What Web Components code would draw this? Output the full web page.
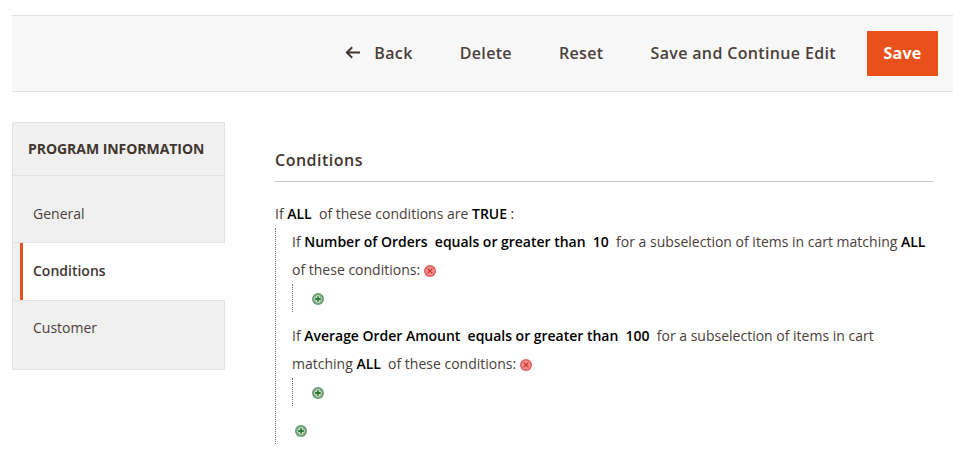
<!DOCTYPE html>
<html>
<head>
<meta charset="utf-8">
<title>Program</title>
<style>
html, body { margin: 0; background: #fff; }
body { font-family: "Open Sans", sans-serif; color: #41362f; }
</style>
</head>
<body>
<page-shell>
    <action-bar slot="bar">
        <action-link back>Back</action-link>
        <action-link>Delete</action-link>
        <action-link>Reset</action-link>
        <action-link>Save and Continue Edit</action-link>
        <primary-button>Save</primary-button>
    </action-bar>
    <side-tabs slot="side" heading="PROGRAM INFORMATION">
        <side-tab first>General</side-tab>
        <side-tab active>Conditions</side-tab>
        <side-tab last>Customer</side-tab>
    </side-tabs>
    <rule-panel slot="main" heading="Conditions">
        <rule-line>If <b>ALL</b>&nbsp; of these conditions are <b>TRUE</b> :</rule-line>
        <rule-group root>
            <rule-line>If <b>Number of Orders</b>&nbsp; <b>equals or greater than</b>&nbsp; <b>10</b>&nbsp; for a subselection of items in cart matching <b>ALL</b>&nbsp; of these conditions: <rule-icon kind="remove"></rule-icon></rule-line>
            <rule-group><rule-icon kind="add"></rule-icon></rule-group>
            <rule-line second>If <b>Average Order Amount</b>&nbsp; <b>equals or greater than</b>&nbsp; <b>100</b>&nbsp; for a subselection of items in cart matching <b>ALL</b>&nbsp; of these conditions: <rule-icon kind="remove"></rule-icon></rule-line>
            <rule-group><rule-icon kind="add"></rule-icon></rule-group>
            <rule-icon kind="add" slot="foot"></rule-icon>
        </rule-group>
    </rule-panel>
</page-shell>

<script>
customElements.define("page-shell", class extends HTMLElement {
    constructor() {
        super().attachShadow({ mode: "open" }).innerHTML = `
        <style>
        :host { display: block; padding: 15px 17px 0 12px; }
        .cols { display: flex; align-items: flex-start; margin-top: 30px; }
        </style>
        <slot name="bar"></slot>
        <div class="cols">
            <slot name="side"></slot>
            <slot name="main"></slot>
        </div>`;
    }
});

customElements.define("action-bar", class extends HTMLElement {
    constructor() {
        super().attachShadow({ mode: "open" }).innerHTML = `
        <style>
        :host {
            display: flex;
            justify-content: flex-end;
            align-items: center;
            box-sizing: border-box;
            height: 77px;
            padding-right: 15px;
            background: #f8f8f8;
            border-top: 1px solid #e3e3e3;
            border-bottom: 1px solid #e3e3e3;
        }
        </style>
        <slot></slot>`;
    }
});

customElements.define("action-link", class extends HTMLElement {
    constructor() {
        super().attachShadow({ mode: "open" }).innerHTML = `
        <style>
        :host {
            display: inline-flex;
            align-items: center;
            margin-right: 31px;
            padding: 0 0 2px 16px;
            font-size: 16px;
            font-weight: 600;
            letter-spacing: .35px;
            line-height: 22px;
            color: #4a403a;
            white-space: nowrap;
        }
        svg { display: none; width: 16px; height: 13px; margin-right: 13px; }
        :host([back]) svg { display: block; }
        </style>
        <svg viewBox="0 0 16 13"><path d="M15 6.5H2M7.2 1.2 1.8 6.5l5.4 5.3" fill="none" stroke="#41362f" stroke-width="1.9"/></svg>
        <slot></slot>`;
    }
});

customElements.define("primary-button", class extends HTMLElement {
    constructor() {
        super().attachShadow({ mode: "open" }).innerHTML = `
        <style>
        :host {
            display: flex;
            align-items: center;
            justify-content: center;
            box-sizing: border-box;
            width: 71px;
            height: 45px;
            padding-bottom: 2px;
            background: #e85119;
            color: #fff;
            font-size: 16px;
            font-weight: 700;
            letter-spacing: .3px;
        }
        </style>
        <slot></slot>`;
    }
});

customElements.define("side-tabs", class extends HTMLElement {
    constructor() {
        super().attachShadow({ mode: "open" }).innerHTML = `
        <style>
        :host {
            display: block;
            flex: none;
            box-sizing: border-box;
            width: 213px;
            height: 248px;
            background: #f0f0f0;
            border: 1px solid #e3e3e3;
        }
        h2 {
            margin: 0;
            box-sizing: border-box;
            height: 53px;
            padding: 16px 0 0 15px;
            border-bottom: 1px solid #e3e3e3;
            font-size: 14px;
            line-height: 20px;
            font-weight: 700;
            letter-spacing: -.05px;
            color: #41362f;
            white-space: nowrap;
        }
        </style>
        <h2></h2>
        <slot></slot>`;
        this.shadowRoot.querySelector("h2").textContent = this.getAttribute("heading");
    }
});

customElements.define("side-tab", class extends HTMLElement {
    constructor() {
        super().attachShadow({ mode: "open" }).innerHTML = `
        <style>
        :host {
            display: flex;
            align-items: center;
            box-sizing: border-box;
            padding-left: 20px;
            font-size: 14px;
            color: #4a403a;
        }
        :host([first]) {
            height: 67px;
            padding-top: 10px;
            padding-bottom: 2px;
            border-bottom: 1px solid #e3e3e3;
        }
        :host([last]) {
            height: 70px;
            margin-bottom: -1px;
            padding-bottom: 17px;
            border-top: 1px solid #e3e3e3;
        }
        :host([active]) {
            height: 57px;
            margin: 0 -1px 0 7px;
            padding: 0 0 2px 10px;
            background: #fff;
            border-left: 3px solid #e85119;
            font-weight: 600;
            color: #41362f;
        }
        </style>
        <slot></slot>`;
    }
});

customElements.define("rule-panel", class extends HTMLElement {
    constructor() {
        super().attachShadow({ mode: "open" }).innerHTML = `
        <style>
        :host {
            display: block;
            flex: 1;
            min-width: 0;
            margin: 0 20px 0 50px;
            font-size: 14px;
            color: #4a403a;
        }
        h3 {
            margin: 0 0 18px;
            box-sizing: border-box;
            height: 60px;
            padding-top: 26px;
            border-bottom: 1px solid #c4c4c4;
            font-size: 16px;
            line-height: 24px;
            font-weight: 600;
            letter-spacing: .5px;
            color: #41362f;
        }
        </style>
        <h3></h3>
        <slot></slot>`;
        this.shadowRoot.querySelector("h3").textContent = this.getAttribute("heading");
    }
});

customElements.define("rule-line", class extends HTMLElement {
    constructor() {
        super().attachShadow({ mode: "open" }).innerHTML = `
        <style>
        :host { display: block; line-height: 28px; }
        :host([second]) { margin-top: 10px; }
        ::slotted(b) { font-weight: 600; color: #000; letter-spacing: -.02px; }
        </style>
        <slot></slot>`;
    }
});

customElements.define("rule-group", class extends HTMLElement {
    constructor() {
        super().attachShadow({ mode: "open" }).innerHTML = `
        <style>
        :host {
            display: block;
            height: 28px;
            padding: 0 0 0 19px;
            border-left: 1px dotted #6f6f6f;
            line-height: 0;
        }
        :host([root]) {
            height: auto;
            padding: 0 0 0 16px;
        }
        .foot { display: block; margin: 19px 0 0 3px; height: 19px; }
        :host(:not([root])) .foot { display: none; }
        :host(:not([root])) .body { padding-top: 9px; }
        </style>
        <div class="body"><slot></slot></div>
        <div class="foot"><slot name="foot"></slot></div>`;
    }
});

customElements.define("rule-icon", class extends HTMLElement {
    constructor() {
        super().attachShadow({ mode: "open" }).innerHTML = `
        <style>
        :host { display: inline-block; width: 12px; height: 12px; vertical-align: -2px; }
        svg { display: block; width: 12px; height: 12px; }
        </style>`;
        const add = this.getAttribute("kind") === "add";
        const mark = add
            ? `<path d="M6 2.6v6.8M2.6 6h6.8" stroke="#e6f3e4" stroke-width="3.2" fill="none"/><path d="M6 3.2v5.6M3.2 6h5.6" stroke="#2c7a3a" stroke-width="1.8" fill="none"/>`
            : `<path d="M3.6 3.6l4.8 4.8M8.4 3.6 3.6 8.4" stroke="#c9302c" stroke-width="1.2" fill="none"/>`;
        this.shadowRoot.innerHTML += `<svg viewBox="0 0 12 12">
            <circle cx="6" cy="6" r="6" fill="${add ? "#6a9a70" : "#dd5a5a"}"/>
            <circle cx="6" cy="6" r="4.6" fill="${add ? "#86b08a" : "#f48f8f"}"/>
            ${mark}
        </svg>`;
    }
});
</script>
</body>
</html>
